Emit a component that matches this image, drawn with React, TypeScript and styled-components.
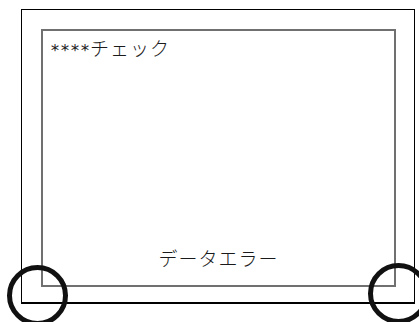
import styled, { createGlobalStyle } from "styled-components";

const GlobalStyle = createGlobalStyle`
  html, body {
    margin: 0;
    padding: 0;
    background: #ffffff;
  }
  body {
    width: 419px;
    height: 322px;
    overflow: hidden;
    position: relative;
    font-family: "Noto Sans CJK JP", "Noto Sans", sans-serif;
  }
`;

const Screen = styled.div`
  padding: 9px 0 0 21px;
`;

const OuterFrame = styled.div`
  box-sizing: border-box;
  width: 394px;
  height: 295px;
  border: 1px solid #000;
  border-bottom-width: 2px;
  padding: 19px 18px 15px 19px;
`;

const Panel = styled.div`
  box-sizing: border-box;
  width: 100%;
  height: 100%;
  border: 2px solid #707070;
  display: flex;
  flex-direction: column;
  justify-content: space-between;
  padding: 4px 7px 14px;
  color: #1a1a1a;
  font-weight: 300;
  font-size: 19px;
  line-height: 26px;
`;

const Title = styled.p`
  margin: 0;
  letter-spacing: 1px;

  .mark {
    letter-spacing: 0;
    font-family: "DejaVu Sans Mono", monospace;
    font-size: 16.6px;
  }
`;

const Message = styled.p`
  margin: 0;
  text-align: center;
  letter-spacing: 1px;
`;

const Marker = styled.div<{ $x: number; $y: number }>`
  position: absolute;
  left: ${({ $x }) => $x}px;
  top: ${({ $y }) => $y}px;
  width: 61px;
  height: 61px;
  box-sizing: border-box;
  border: 5px solid #111;
  border-radius: 50%;
`;

const App = () => {
  return (
    <>
      <GlobalStyle />
      <Screen>
        <OuterFrame>
          <Panel>
            <Title>
              <span className="mark">****</span>チェック
            </Title>
            <Message>データエラー</Message>
          </Panel>
        </OuterFrame>
      </Screen>
      <Marker $x={7} $y={265} />
      <Marker $x={368} $y={263} />
    </>
  );
};

export default App;
